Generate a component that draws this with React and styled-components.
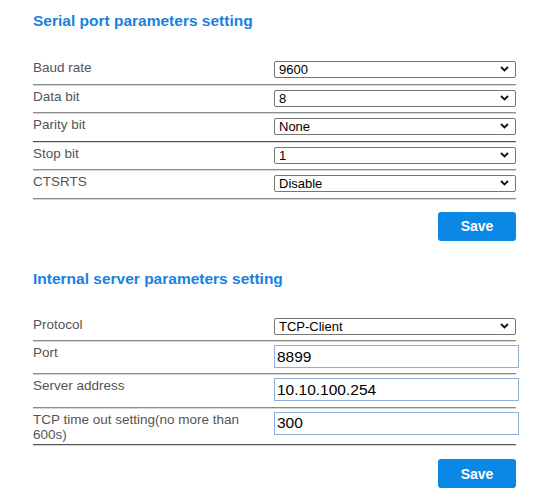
import React from 'react';
import styled, { createGlobalStyle } from 'styled-components';

const GlobalStyle = createGlobalStyle`
  body {
    margin: 0;
    background: #ffffff;
    font-family: "Liberation Sans", Arial, sans-serif;
  }
`

const Page = styled.div`
  width: 483px;
  padding: 11px 0 0 33px;
`

const Section = styled.section`
  margin-bottom: 28px;
`

const Title = styled.h2`
  margin: 0 0 ${props => props.gap}px 0;
  font-size: 15.5px;
  line-height: 20px;
  font-weight: bold;
  color: #1a7fe1;
`

const Row = styled.div`
  display: grid;
  grid-template-columns: 241px 242px;
  align-items: start;
  padding: 4px 0 ${props => props.bottom}px 0;
  border-bottom: 1px solid ${props => props.dark ? '#555555' : '#8c8c8c'};
  box-shadow: 0 1px 0 #d6d6d6;
`

const Label = styled.span`
  font-size: 13.5px;
  line-height: 15px;
  color: #555555;
  padding-right: 4px;
`

const SelectBox = styled.div`
  position: relative;
  height: 17px;
`

const Select = styled.select`
  appearance: none;
  box-sizing: border-box;
  width: 100%;
  height: 17px;
  margin: 0;
  padding: 0 20px 0 4px;
  border: 1px solid #767676;
  border-radius: 2px;
  background: #ffffff;
  font-family: "Liberation Sans", Arial, sans-serif;
  font-size: 13px;
  line-height: 15px;
  color: #000000;
  outline: none;
`

const Chevron = styled.svg`
  position: absolute;
  right: 7px;
  top: 6px;
  pointer-events: none;
`

const TextInput = styled.input`
  box-sizing: border-box;
  width: 245px;
  height: 23px;
  margin: 0;
  padding: 0 2px;
  border: 1px solid #8fb0d6;
  border-radius: 0;
  font-family: "Liberation Sans", Arial, sans-serif;
  font-size: 15.5px;
  color: #000000;
  outline: none;
`

const Actions = styled.div`
  display: flex;
  justify-content: flex-end;
  margin-top: ${props => props.top}px;
`

const SaveButton = styled.button`
  width: 78px;
  height: 29px;
  border: none;
  border-radius: 3px;
  background: #0b87e6;
  color: #ffffff;
  font-family: "Liberation Sans", Arial, sans-serif;
  font-size: 14px;
  font-weight: bold;
  cursor: pointer;
`

function Dropdown({ value, options }) {
  return (
    <SelectBox>
      <Select defaultValue={value}>
        {options.map(o => <option key={o} value={o}>{o}</option>)}
      </Select>
      <Chevron width="9" height="6" viewBox="0 0 9 6">
        <path d="M1 1 L4.5 4.5 L8 1" fill="none" stroke="#111" strokeWidth="1.8" />
      </Chevron>
    </SelectBox>
  )
}

const serialRows = [
  { label: 'Baud rate', value: '9600', options: ['1200', '2400', '4800', '9600', '19200', '38400', '57600', '115200'] },
  { label: 'Data bit', value: '8', options: ['5', '6', '7', '8'] },
  { label: 'Parity bit', value: 'None', options: ['None', 'Odd', 'Even'], dark: true },
  { label: 'Stop bit', value: '1', options: ['1', '2'] },
  { label: 'CTSRTS', value: 'Disable', options: ['Disable', 'Enable'] },
]

export default function App() {
  return (
    <Page>
      <GlobalStyle />
      <Section>
        <Title gap={25}>Serial port parameters setting</Title>
        {serialRows.map(r => (
          <Row key={r.label} bottom={6.5} dark={r.dark}>
            <Label>{r.label}</Label>
            <Dropdown value={r.value} options={r.options} />
          </Row>
        ))}
        <Actions top={13}>
          <SaveButton>Save</SaveButton>
        </Actions>
      </Section>
      <Section>
        <Title gap={24}>Internal server parameters setting</Title>
        <Row bottom={6.5}>
          <Label>Protocol</Label>
          <Dropdown value="TCP-Client" options={['TCP-Server', 'TCP-Client', 'UDP-Server', 'UDP-Client']} />
        </Row>
        <Row bottom={5}>
          <Label>Port</Label>
          <TextInput defaultValue="8899" />
        </Row>
        <Row bottom={5.5}>
          <Label>Server address</Label>
          <TextInput defaultValue="10.10.100.254" />
        </Row>
        <Row bottom={2.5} dark>
          <Label>TCP time out setting(no more than 600s)</Label>
          <TextInput defaultValue="300" />
        </Row>
        <Actions top={14}>
          <SaveButton>Save</SaveButton>
        </Actions>
      </Section>
    </Page>
  )
}
